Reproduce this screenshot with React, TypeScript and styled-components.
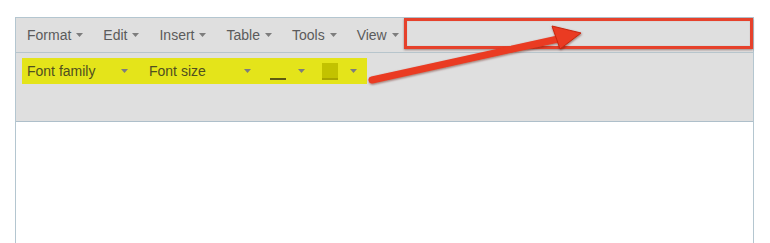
import React from 'react'
import styled, { createGlobalStyle } from 'styled-components'

const GlobalStyle = createGlobalStyle`
  html, body {
    margin: 0;
    padding: 0;
    background: #fff;
    overflow: hidden;
  }
  body {
    font-family: "Liberation Sans", Arial, sans-serif;
  }
`

const menuItems = ['Format', 'Edit', 'Insert', 'Table', 'Tools', 'View']

// small grey caret under every dropdown
const Caret: React.FC<{ gap?: number }> = ({ gap = 5 }) => (
  <StyledCaret $gap={gap} width="7" height="4" viewBox="0 0 7 4">
    <path d="M0 0 L7 0 L3.5 4 Z" fill="currentColor" />
  </StyledCaret>
)

const App: React.FC = () => {
  return (
    <>
      <GlobalStyle />
      <StyledPage>
        <StyledEditor>
          <StyledMenuBar>
            {menuItems.map(item => (
              <StyledMenuItem key={item}>
                {item}
                <Caret />
              </StyledMenuItem>
            ))}
          </StyledMenuBar>
          <StyledToolbar>
            <StyledHighlight>
              <StyledSelect $width={101} $space={21}>
                <span>Font family</span>
                <Caret />
              </StyledSelect>
              <StyledSelect $width={102} $space={19}>
                <span>Font size</span>
                <Caret />
              </StyledSelect>
              <StyledColorButton $space={17}>
                <StyledTextColor />
                <Caret gap={12} />
              </StyledColorButton>
              <StyledColorButton $space={0}>
                <StyledBgColor />
                <Caret gap={12} />
              </StyledColorButton>
            </StyledHighlight>
          </StyledToolbar>
          <StyledBody />
        </StyledEditor>

        {/* annotation overlay */}
        <StyledCallout />
        <StyledArrow width="770" height="243" viewBox="0 0 770 243">
          <defs>
            <filter id="shadow" x="-10%" y="-50%" width="120%" height="200%">
              <feDropShadow dx="0.5" dy="1" stdDeviation="0.8" floodColor="#5a0d05" floodOpacity="0.55" />
            </filter>
          </defs>
          <g filter="url(#shadow)">
            <line x1="372" y1="80" x2="558" y2="39" stroke="#ea3a22" strokeWidth="7" strokeLinecap="round" />
            <polygon points="552,26 581,33 560,49" fill="#ea3a22" stroke="#c9260f" strokeWidth="1" strokeLinejoin="round" />
          </g>
        </StyledArrow>
      </StyledPage>
    </>
  )
}

const StyledPage = styled.div`
  position: relative;
  width: 770px;
  height: 243px;
  padding: 17px 16px 0 15px;
  box-sizing: border-box;
`

const StyledEditor = styled.div`
  border: 1px solid #b4c6d0;
  border-bottom: none;
  background: #dfdfdf;
  height: 226px;
  box-sizing: border-box;
  display: flex;
  flex-direction: column;
`

const StyledMenuBar = styled.div`
  display: flex;
  align-items: center;
  height: 34px;
  padding-left: 1px;
  border-bottom: 1px solid #b7c5cc;
`

const StyledMenuItem = styled.div`
  display: flex;
  align-items: center;
  padding: 0 10px;
  font-size: 14px;
  color: #5b5b5b;
`

const StyledCaret = styled.svg<{ $gap: number }>`
  margin-left: ${props => props.$gap}px;
  color: #7d7d7d;
  flex: none;
`

const StyledToolbar = styled.div`
  height: 69px;
  padding: 5px 0 0 6px;
  box-sizing: border-box;
  border-bottom: 1px solid #aebfca;
`

const StyledHighlight = styled.div`
  display: flex;
  align-items: center;
  height: 26px;
  width: 345px;
  background: #e4e41a;
  padding-left: 5px;
  box-sizing: border-box;
  & > * {
    flex: none;
  }
`

const StyledSelect = styled.div<{ $width: number, $space: number }>`
  display: flex;
  align-items: center;
  justify-content: space-between;
  width: ${props => props.$width}px;
  margin-right: ${props => props.$space}px;
  font-size: 14px;
  color: #6f6f2a;
  span {
    color: #4f4f20;
  }
`

const StyledColorButton = styled.div<{ $space: number }>`
  display: flex;
  align-items: center;
  margin-right: ${props => props.$space}px;
`

const StyledTextColor = styled.div`
  width: 16px;
  height: 16px;
  border-bottom: 2px solid #5e5a10;
  box-sizing: border-box;
  margin-top: 2px;
`

const StyledBgColor = styled.div`
  width: 16px;
  height: 17px;
  background: #c2c200;
  border-bottom: 2px solid #a8a400;
  box-sizing: border-box;
`

const StyledBody = styled.div`
  flex: 1;
  background: #fff;
`

const StyledCallout = styled.div`
  position: absolute;
  left: 404px;
  top: 18px;
  width: 349px;
  height: 31px;
  box-sizing: border-box;
  border: 3px solid #e6412b;
  box-shadow: 0 1px 2px rgba(80, 20, 10, 0.45), inset 0 0 1px rgba(80, 20, 10, 0.3);
`

const StyledArrow = styled.svg`
  position: absolute;
  left: 0;
  top: 0;
  pointer-events: none;
`

export default App
